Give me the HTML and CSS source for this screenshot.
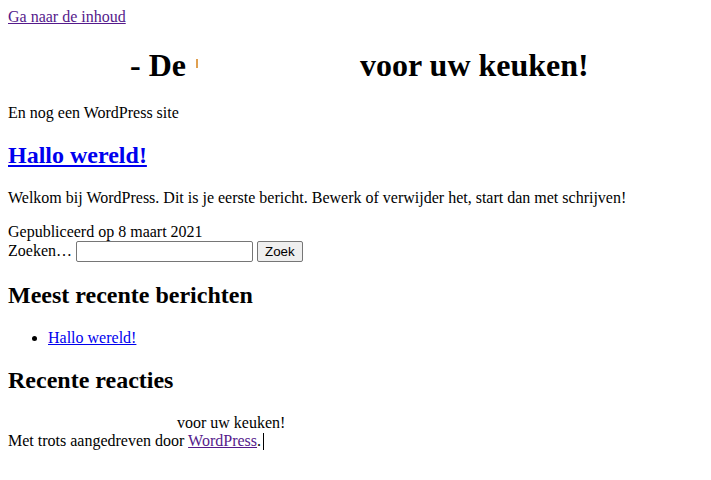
FILE: index.html
```html
<!DOCTYPE html>
<html lang="nl">
<head>
    <meta charset="UTF-8">
    <meta name="viewport" content="width=device-width, initial-scale=1.0">
    <title>Hallo wereld! - De keuken</title>
    <link rel="stylesheet" href="styles.css">
</head>
<body>
    <a class="skip-link visited" href="#content">Ga naar de inhoud</a>

    <header class="site-header">
        <h1 class="site-title"><span class="mask mask-lead"></span>- De<span class="mask mask-mid"><span class="sliver"></span></span>voor uw keuken!</h1>
        <p class="site-description">En nog een WordPress site</p>
    </header>

    <main id="content" class="site-main">
        <article class="post">
            <h2 class="entry-title"><a href="#">Hallo wereld!</a></h2>
            <p class="entry-content">Welkom bij WordPress. Dit is je eerste bericht. Bewerk of verwijder het, start dan met schrijven!</p>
            <div class="entry-meta">Gepubliceerd op 8 maart 2021</div>
        </article>
    </main>

    <aside class="widgets">
        <form class="search-form">
            <label for="s">Zoeken…</label>
            <input type="search" id="s" class="search-field">
            <button type="button" class="search-submit">Zoek</button>
        </form>

        <section class="widget">
            <h2 class="widget-title">Meest recente berichten</h2>
            <ul class="widget-list">
                <li><a href="#">Hallo wereld!</a></li>
            </ul>
        </section>

        <section class="widget">
            <h2 class="widget-title">Recente reacties</h2>
        </section>
    </aside>

    <footer class="site-footer">
        <div class="footer-title"><span class="mask mask-lead-sm"></span><span class="faded">- De</span><span class="mask mask-mid-sm"></span>voor uw keuken!</div>
        <div class="credits">Met trots aangedreven door <a class="visited" href="#">WordPress</a>.<span class="caret"></span></div>
    </footer>
</body>
</html>
```

FILE: styles.css
```css
body {
    margin: 8px;
    font-family: "Liberation Serif", "Times New Roman", serif;
    font-size: 16px;
    color: #000;
    background: #fff;
}
a {
    color: #0000ee;
}
a.visited {
    color: #551a8b;
}
.skip-link {
    display: inline-block;
}
.site-title {
    font-size: 32px;
    font-weight: bold;
    margin: 21px 0 20px;
    white-space: nowrap;
}
.mask {
    display: inline-block;
    height: 1px;
}
.mask-lead {
    width: 122px;
}
.mask-mid {
    width: 174px;
    height: auto;
    vertical-align: baseline;
}
.sliver {
    display: inline-block;
    width: 2px;
    height: 9px;
    margin-left: 10px;
    background: #e0a050;
    vertical-align: 8px;
}
.mask-lead-sm {
    width: 54px;
}
.mask-mid-sm {
    width: 87px;
}
.faded {
    color: transparent;
}
.site-description {
    margin: 16px 0;
}
.entry-title {
    font-size: 24px;
    margin: 20px 0;
}
.entry-content {
    margin: 16px 0 16px;
}
.search-form label {
    display: inline;
}
.search-field {
    width: 177px;
    height: 21px;
    box-sizing: border-box;
    font-family: Arial, "Liberation Sans", sans-serif;
    font-size: 13px;
    border: 1px solid #767676;
    border-radius: 2px;
    padding: 1px 2px;
    margin: 0;
    vertical-align: baseline;
}
.search-submit {
    font-family: Arial, "Liberation Sans", sans-serif;
    font-size: 13.33px;
    padding: 1px 7px;
    height: 21px;
    background: #efefef;
    border: 1px solid #767676;
    border-radius: 2px;
    color: #000;
    margin: 0;
}
.widget-title {
    font-size: 24px;
    margin: 20px 0;
}
.widget-list {
    margin: 16px 0;
    padding-left: 40px;
}
.credits .caret {
    display: inline-block;
    width: 1px;
    height: 17px;
    background: #000;
    vertical-align: -4px;
    margin-left: 2px;
}
```
